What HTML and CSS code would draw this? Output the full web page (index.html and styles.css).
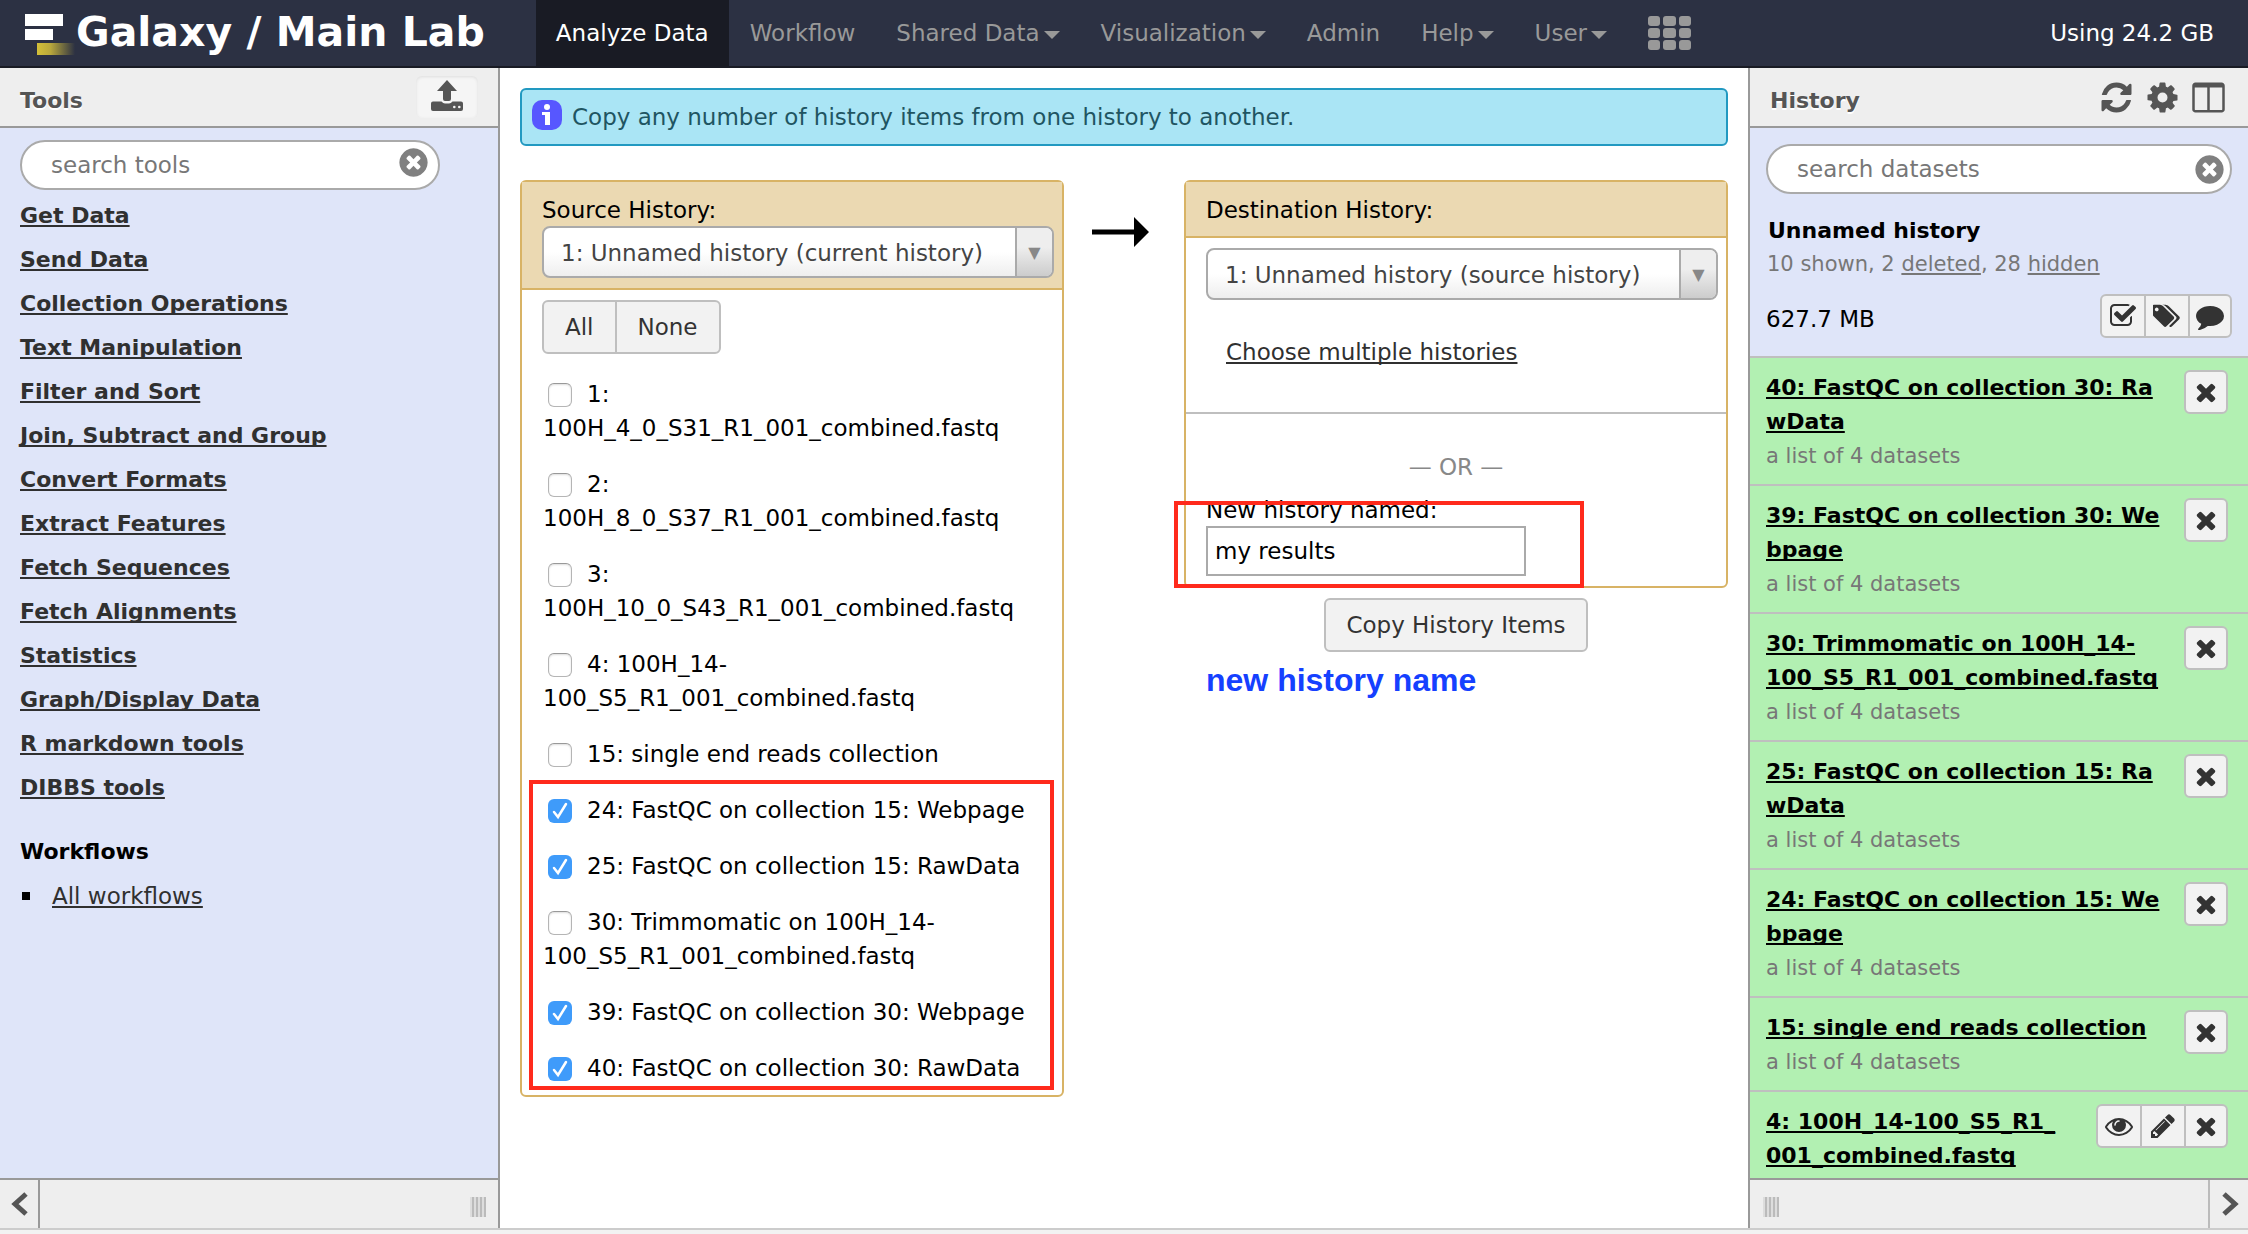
FILE: index.html
```html
<!DOCTYPE html>
<html lang="en">
<head>
<meta charset="utf-8">
<title>Galaxy / Main Lab</title>
<link rel="stylesheet" href="styles.css">
</head>
<body>
<svg class="sprite" aria-hidden="true">
  <symbol id="i-times" viewBox="0 0 1792 1792"><path d="M1490 1322q0 40-28 68l-136 136q-28 28-68 28t-68-28l-294-294-294 294q-28 28-68 28t-68-28l-136-136q-28-28-28-68t28-68l294-294-294-294q-28-28-28-68t28-68l136-136q28-28 68-28t68 28l294 294 294-294q28-28 68-28t68 28l136 136q28 28 28 68t-28 68l-294 294 294 294q28 28 28 68z"/></symbol>
  <symbol id="i-clear" viewBox="0 0 1792 1792"><path d="M1277 1122q0-26-19-45l-181-181 181-181q19-19 19-45 0-27-19-46l-90-90q-19-19-46-19-26 0-45 19l-181 181-181-181q-19-19-45-19-27 0-46 19l-90 90q-19 19-19 46 0 26 19 45l181 181-181 181q-19 19-19 45 0 27 19 46l90 90q19 19 46 19 26 0 45-19l181-181 181 181q19 19 45 19 27 0 46-19l90-90q19-19 19-46zm387-226q0 209-103 385.5t-279.5 279.5-385.5 103-385.5-103-279.5-279.5-103-385.5 103-385.5 279.5-279.5 385.5-103 385.5 103 279.5 279.5 103 385.5z"/></symbol>
  <symbol id="i-refresh" viewBox="0 0 1792 1792"><path d="M1639 1056q0 5-1 7-64 268-268 434.5t-478 166.5q-146 0-282.5-55t-243.5-157l-129 129q-19 19-45 19t-45-19-19-45v-448q0-26 19-45t45-19h448q26 0 45 19t19 45-19 45l-137 137q71 66 161 102t187 36q134 0 250-65t186-179q11-17 53-117 8-23 30-23h192q13 0 22.5 9.5t9.5 22.5zm25-800v448q0 26-19 45t-45 19h-448q-26 0-45-19t-19-45 19-45l138-138q-148-137-349-137-134 0-250 65t-186 179q-11 17-53 117-8 23-30 23h-199q-13 0-22.5-9.5t-9.5-22.5v-7q65-268 270-434.5t480-166.5q146 0 284 55.5t245 156.5l130-129q19-19 45-19t45 19 19 45z"/></symbol>
  <symbol id="i-cog" viewBox="0 0 1792 1792"><path d="M1152 896q0-106-75-181t-181-75-181 75-75 181 75 181 181 75 181-75 75-181zm512-109v222q0 12-8 23t-20 13l-185 28q-19 54-39 91 35 50 107 138 10 12 10 25t-9 23q-27 37-99 108t-94 71q-12 0-26-9l-138-108q-44 23-91 38-16 136-29 186-7 28-36 28h-222q-14 0-24.5-8.5t-11.5-21.5l-28-184q-49-16-90-37l-141 107q-10 9-25 9-14 0-25-11-126-114-165-168-7-10-7-23 0-12 8-23 15-21 51-66.5t54-70.5q-27-50-41-99l-183-27q-13-2-21-12.5t-8-23.5v-222q0-12 8-23t19-13l186-28q14-46 39-92-40-57-107-138-10-12-10-24 0-10 9-23 26-36 98.5-107.5t94.5-71.5q13 0 26 10l138 107q44-23 91-38 16-136 29-186 7-28 36-28h222q14 0 24.5 8.5t11.5 21.5l28 184q49 16 90 37l142-107q9-9 24-9 13 0 25 10 129 119 165 170 7 8 7 22 0 12-8 23-15 21-51 66.5t-54 70.5q26 50 41 98l183 28q13 2 21 12.5t8 23.5z"/></symbol>
  <symbol id="i-columns" viewBox="0 0 1792 1792"><path d="M224 1536h608v-1152h-640v1120q0 13 9.5 22.5t22.5 9.5zm1376-32v-1120h-640v1152h608q13 0 22.5-9.5t9.5-22.5zm128-1216v1216q0 66-47 113t-113 47h-1344q-66 0-113-47t-47-113v-1216q0-66 47-113t113-47h1344q66 0 113 47t47 113z"/></symbol>
  <symbol id="i-check" viewBox="0 0 1792 1792"><path d="M1472 930v318q0 119-84.5 203.5t-203.5 84.5h-832q-119 0-203.5-84.5t-84.5-203.5v-832q0-119 84.5-203.5t203.5-84.5h832q63 0 117 25 15 7 18 23 3 17-9 29l-49 49q-10 10-23 10-3 0-9-2-23-6-45-6h-832q-66 0-113 47t-47 113v832q0 66 47 113t113 47h832q66 0 113-47t47-113v-254q0-13 9-22l64-64q10-10 23-10 6 0 12 3 20 8 20 29zm231-489l-814 814q-24 24-57 24t-57-24l-430-430q-24-24-24-57t24-57l110-110q24-24 57-24t57 24l263 263 647-647q24-24 57-24t57 24l110 110q24 24 24 57t-24 57z"/></symbol>
  <symbol id="i-tags" viewBox="0 0 1920 1792"><path d="M384 448q0-53-37.5-90.5t-90.5-37.5-90.5 37.5-37.5 90.5 37.5 90.5 90.5 37.5 90.5-37.5 37.5-90.5zm1067 576q0 53-37 90l-491 492q-39 37-91 37-53 0-90-37l-715-716q-38-37-64.5-101t-26.5-117v-416q0-52 38-90t90-38h416q53 0 117 26.5t102 64.5l715 714q37 39 37 91zm384 0q0 53-37 90l-491 492q-39 37-91 37-36 0-59-14t-53-45l470-470q37-37 37-90 0-52-37-91l-715-714q-38-38-102-64.5t-117-26.5h224q53 0 117 26.5t102 64.5l715 714q37 39 37 91z"/></symbol>
  <symbol id="i-comment" viewBox="0 0 1792 1792"><path d="M1792 896q0 174-120 321.5t-326 233-450 85.5q-70 0-145-8-198 175-460 242-49 14-114 22-17 2-30.5-9t-17.5-29v-1q-3-4-.5-12t2-10 4.5-9.5l6-9 7-8.5 8-9q7-8 31-34.5t34.5-38 31-39.5 32.5-51 27-59 26-76q-157-89-247.5-220t-90.5-281q0-130 71-248.5t191-204.5 286-136.5 348-50.5q244 0 450 85.5t326 233 120 321.5z"/></symbol>
  <symbol id="i-eye" viewBox="0 0 1792 1792"><path d="M1664 960q-152-236-381-353 61 104 61 225 0 185-131.5 316.5t-316.5 131.5-316.5-131.5-131.5-316.5q0-121 61-225-229 117-381 353 133 205 333.5 326.5t434.5 121.5 434.5-121.5 333.5-326.5zm-720-384q0-20-14-34t-34-14q-125 0-214.5 89.5t-89.5 214.5q0 20 14 34t34 14 34-14 14-34q0-86 61-147t147-61q20 0 34-14t14-34zm848 384q0 34-20 69-140 230-376.5 368.5t-499.5 138.5-499.5-139-376.5-368q-20-35-20-69t20-69q140-229 376.5-368t499.5-139 499.5 139 376.5 368q20 35 20 69z"/></symbol>
  <symbol id="i-pencil" viewBox="0 0 1792 1792"><path d="M491 1536l91-91-235-235-91 91v107h128v128h107zm523-928q0-22-22-22-10 0-17 7l-542 542q-7 7-7 17 0 22 22 22 10 0 17-7l542-542q7-7 7-17zm-54-192l416 416-832 832h-416v-416zm683 96q0 53-37 90l-166 166-416-416 166-165q36-38 90-38 53 0 91 38l235 234q37 39 37 91z"/></symbol>
</svg>

<header class="masthead">
  <a class="brand" href="#">
    <svg class="logo" viewBox="0 0 52 42" aria-hidden="true">
      <defs><linearGradient id="beam"><stop offset="0" stop-color="#d3bf38"/><stop offset=".35" stop-color="#b9a83c"/><stop offset="1" stop-color="#2c3143"/></linearGradient></defs>
      <rect x="1" y="1" width="38" height="12" fill="#fff"/>
      <rect x="1" y="16" width="28" height="11" fill="#fff"/>
      <rect x="13" y="30" width="38" height="12" fill="url(#beam)"/>
    </svg>
    <span>Galaxy / Main Lab</span>
  </a>
  <nav class="menu">
    <a class="active" href="#">Analyze Data</a>
    <a href="#">Workflow</a>
    <a class="drop" href="#">Shared Data</a>
    <a class="drop" href="#">Visualization</a>
    <a href="#">Admin</a>
    <a class="drop" href="#">Help</a>
    <a class="drop" href="#">User</a>
    <a href="#" aria-label="Scratchbook">
      <svg class="grid-icon" viewBox="0 0 43 34"><g fill="#999"><rect width="12" height="10" rx="3"/><rect x="15" width="13" height="10" rx="3"/><rect x="31" width="12" height="10" rx="3"/><rect y="12" width="12" height="10" rx="3"/><rect x="15" y="12" width="13" height="10" rx="3"/><rect x="31" y="12" width="12" height="10" rx="3"/><rect y="24" width="12" height="10" rx="3"/><rect x="15" y="24" width="13" height="10" rx="3"/><rect x="31" y="24" width="12" height="10" rx="3"/></g></svg>
    </a>
  </nav>
  <span class="quota">Using 24.2 GB</span>
</header>

<div class="columns">
  <aside class="panel tools">
    <div class="panel-head">
      <h2>Tools</h2>
      <button class="upload" type="button" aria-label="Upload data">
        <svg viewBox="0 0 32 32"><path fill="#555" d="M16 0l10 11h-6v8q0 2-2 2h-4q-2 0-2-2v-8H6z"/><path fill="#555" fill-rule="evenodd" d="M2 21.500h8.500q1.500 2 3.500 2h4q2 0 3.500-2H30q2 0 2 2V29q0 2-2 2H2q-2 0-2-2v-5.500q0-2 2-2zM22 27a1.300 1.300 0 1 0 2.600 0a1.300 1.300 0 1 0-2.600 0zM27 27a1.300 1.300 0 1 0 2.600 0a1.300 1.300 0 1 0-2.600 0z"/></svg>
      </button>
    </div>
    <div class="panel-body">
      <div class="search">
        <input type="text" placeholder="search tools" aria-label="search tools">
        <button type="button" aria-label="Clear search"><svg><use href="#i-clear"/></svg></button>
      </div>
      <ul class="sections">
        <li><a href="#">Get Data</a></li>
        <li><a href="#">Send Data</a></li>
        <li><a href="#">Collection Operations</a></li>
        <li><a href="#">Text Manipulation</a></li>
        <li><a href="#">Filter and Sort</a></li>
        <li><a href="#">Join, Subtract and Group</a></li>
        <li><a href="#">Convert Formats</a></li>
        <li><a href="#">Extract Features</a></li>
        <li><a href="#">Fetch Sequences</a></li>
        <li><a href="#">Fetch Alignments</a></li>
        <li><a href="#">Statistics</a></li>
        <li><a href="#">Graph/Display Data</a></li>
        <li><a href="#">R markdown tools</a></li>
        <li><a href="#">DIBBS tools</a></li>
      </ul>
      <h3>Workflows</h3>
      <ul class="workflows"><li><a href="#">All workflows</a></li></ul>
    </div>
    <div class="panel-foot">
      <button class="collapse" type="button" aria-label="Hide tools"><svg viewBox="0 0 18 26"><path d="M15 3L4 13l11 10"/></svg></button>
      <span class="grip"></span>
    </div>
  </aside>

  <main class="center">
    <p class="info">
      <svg viewBox="0 0 30 30" aria-hidden="true"><rect width="30" height="30" rx="10" fill="#5757ff"/><g fill="#fff"><circle cx="15" cy="7" r="3"/><path d="M10 12h8v13h-5V15h-3z"/></g></svg>
      Copy any number of history items from one history to another.
    </p>
    <form class="transfer">
      <section class="card">
        <div class="card-head">
          <label for="source">Source History:</label>
          <span class="select"><select id="source"><option>1: Unnamed history (current history)</option></select></span>
        </div>
        <div class="card-body">
          <div class="group pick"><button type="button">All</button><button type="button">None</button></div>
          <ul class="items">
            <li><label><input type="checkbox">1: 100H_4_0_S31_R1_001_combined.fastq</label></li>
            <li><label><input type="checkbox">2: 100H_8_0_S37_R1_001_combined.fastq</label></li>
            <li><label><input type="checkbox">3: 100H_10_0_S43_R1_001_combined.fastq</label></li>
            <li><label><input type="checkbox">4: 100H_14-<wbr>100_S5_R1_001_combined.fastq</label></li>
            <li><label><input type="checkbox">15: single end reads collection</label></li>
            <li><label><input type="checkbox" checked>24: FastQC on collection 15: Webpage</label></li>
            <li><label><input type="checkbox" checked>25: FastQC on collection 15: RawData</label></li>
            <li><label><input type="checkbox">30: Trimmomatic on 100H_14-<wbr>100_S5_R1_001_combined.fastq</label></li>
            <li><label><input type="checkbox" checked>39: FastQC on collection 30: Webpage</label></li>
            <li><label><input type="checkbox" checked>40: FastQC on collection 30: RawData</label></li>
          </ul>
        </div>
        <span class="mark mark-items"></span>
      </section>

      <svg class="arrow" viewBox="0 0 58 30" aria-hidden="true"><path d="M0 12.500h42V0l15 15-15 15V17.500H0z"/></svg>

      <div class="target">
        <section class="card">
          <div class="card-head"><label for="dest">Destination History:</label></div>
          <div class="card-body">
            <span class="select"><select id="dest"><option>1: Unnamed history (source history)</option></select></span>
            <a class="multiple" href="#">Choose multiple histories</a>
          </div>
          <div class="card-new">
            <p class="or">— OR —</p>
            <label for="new-name">New history named:</label>
            <input id="new-name" type="text" value="my results">
          </div>
          <span class="mark mark-name"></span>
        </section>
        <button class="copy" type="button">Copy History Items</button>
        <p class="note">new history name</p>
      </div>
    </form>
  </main>

  <aside class="panel history">
    <div class="panel-head">
      <h2>History</h2>
      <div class="head-icons">
        <button type="button" aria-label="Refresh history"><svg><use href="#i-refresh"/></svg></button>
        <button type="button" aria-label="History options"><svg><use href="#i-cog"/></svg></button>
        <button type="button" aria-label="View all histories"><svg><use href="#i-columns"/></svg></button>
      </div>
    </div>
    <div class="panel-body">
      <div class="summary">
        <div class="search">
          <input type="text" placeholder="search datasets" aria-label="search datasets">
          <button type="button" aria-label="Clear search"><svg><use href="#i-clear"/></svg></button>
        </div>
        <h3>Unnamed history</h3>
        <p class="counts">10 shown, 2 <a href="#">deleted</a>, 28 <a href="#">hidden</a></p>
        <div class="size">
          <span>627.7 MB</span>
          <div class="group icons">
            <button type="button" aria-label="Select datasets"><svg><use href="#i-check"/></svg></button>
            <button type="button" aria-label="Edit tags"><svg><use href="#i-tags"/></svg></button>
            <button type="button" aria-label="Edit annotation"><svg><use href="#i-comment"/></svg></button>
          </div>
        </div>
      </div>
      <ul class="datasets">
        <li><div><a href="#">40: FastQC on collection 30: Ra<br>wData</a><p>a list of 4 datasets</p></div><div class="group icons"><button type="button" aria-label="Delete"><svg><use href="#i-times"/></svg></button></div></li>
        <li><div><a href="#">39: FastQC on collection 30: We<br>bpage</a><p>a list of 4 datasets</p></div><div class="group icons"><button type="button" aria-label="Delete"><svg><use href="#i-times"/></svg></button></div></li>
        <li><div><a href="#">30: Trimmomatic on 100H_14-<br>100_S5_R1_001_combined.fastq</a><p>a list of 4 datasets</p></div><div class="group icons"><button type="button" aria-label="Delete"><svg><use href="#i-times"/></svg></button></div></li>
        <li><div><a href="#">25: FastQC on collection 15: Ra<br>wData</a><p>a list of 4 datasets</p></div><div class="group icons"><button type="button" aria-label="Delete"><svg><use href="#i-times"/></svg></button></div></li>
        <li><div><a href="#">24: FastQC on collection 15: We<br>bpage</a><p>a list of 4 datasets</p></div><div class="group icons"><button type="button" aria-label="Delete"><svg><use href="#i-times"/></svg></button></div></li>
        <li><div><a href="#">15: single end reads collection</a><p>a list of 4 datasets</p></div><div class="group icons"><button type="button" aria-label="Delete"><svg><use href="#i-times"/></svg></button></div></li>
        <li><div><a href="#">4: 100H_14-100_S5_R1_<br>001_combined.fastq</a></div><div class="group icons"><button type="button" aria-label="View data"><svg><use href="#i-eye"/></svg></button><button type="button" aria-label="Edit attributes"><svg><use href="#i-pencil"/></svg></button><button type="button" aria-label="Delete"><svg><use href="#i-times"/></svg></button></div></li>
      </ul>
    </div>
    <div class="panel-foot">
      <span class="grip"></span>
      <button class="collapse" type="button" aria-label="Hide history"><svg viewBox="0 0 18 26"><path d="M3 3l11 10L3 23"/></svg></button>
    </div>
  </aside>
</div>
<footer class="status"></footer>
</body>
</html>
```
FILE: styles.css
```css
* { box-sizing: border-box; }

body {
  margin: 0;
  height: 100vh;
  display: flex;
  flex-direction: column;
  overflow: hidden;
  background: #fff;
  color: #000;
  font: 23px/34px "DejaVu Sans", Verdana, sans-serif;
}

h2, h3, p, ul { margin: 0; padding: 0; }
h2, h3 { font-size: 22px; }
ul { list-style: none; }
button, input, select { font: inherit; color: inherit; margin: 0; padding: 0; }
button { background: none; border: 0; }
svg { display: block; }
.sprite { position: absolute; width: 0; height: 0; }

a {
  color: #303030;
  text-decoration-thickness: 2px;
  text-underline-offset: 2px;
  text-decoration-skip-ink: none;
}

/* Masthead */
.masthead {
  flex: none;
  display: flex;
  height: 68px;
  background: #2c3143;
  border-bottom: 2px solid #191b24;
}
.brand {
  display: flex;
  align-items: center;
  padding: 0 51px 2px 24px;
  color: #fff;
  font-size: 41px;
  font-weight: bold;
  text-decoration: none;
}
.logo { width: 52px; height: 42px; margin-top: 4px; }
.menu { display: flex; gap: 1px; }
.menu a {
  display: flex;
  align-items: center;
  padding: 0 20px;
  color: #999;
  text-decoration: none;
}
.menu .active { background: #191b24; color: #fff; }
.drop::after {
  content: "";
  margin: 4px 0 0 4px;
  border: 8px solid transparent;
  border-top-color: #999;
  border-bottom: 0;
}
.grid-icon { width: 43px; height: 34px; }
.quota { margin: auto 34px auto auto; color: #fff; }

/* Side panels */
.columns {
  flex: 1;
  min-height: 0;
  display: grid;
  grid-template-columns: 500px minmax(0, 1fr) 500px;
}
.panel {
  display: flex;
  flex-direction: column;
  min-height: 0;
  background: #dfe5f9;
}
.tools { border-right: 2px solid #999; }
.history { border-left: 2px solid #999; }
.panel-head {
  flex: none;
  display: flex;
  align-items: center;
  justify-content: space-between;
  height: 60px;
  padding: 0 20px;
  background: #eee;
  border-bottom: 2px solid #999;
  color: #555;
}
.panel-head h2 { padding-top: 8px; text-shadow: 0 2px #fff; }
.upload {
  padding: 4px 15px 6px;
  border-radius: 6px;
  background: #f5f5f5;
  box-shadow: inset 0 1px 3px #ddd;
}
.upload svg { width: 32px; height: 32px; }
.head-icons { display: flex; gap: 11px; }
.history .panel-head { padding-right: 22px; }
.head-icons svg { width: 35px; height: 35px; fill: #555; }
.panel-body { flex: 1; min-height: 0; overflow: hidden; }
.tools .panel-body { padding: 12px 20px; }
.panel-foot {
  flex: none;
  display: flex;
  align-items: center;
  justify-content: space-between;
  height: 50px;
  background: #eee;
  border-top: 2px solid #999;
}
.collapse { align-self: stretch; display: flex; align-items: center; padding: 0 9px 0 11px; }
.collapse svg { width: 18px; height: 26px; fill: none; stroke: #555; stroke-width: 5px; }
.tools .collapse { border-right: 2px solid #999; }
.history .collapse { border-left: 2px solid #bbb; }
.grip {
  width: 16px;
  height: 20px;
  margin: 6px 12px 0 13px;
  background: repeating-linear-gradient(90deg, #ddd 0 2px, #bbb 2px 4px);
}

/* Search boxes */
.search {
  display: flex;
  align-items: center;
  height: 50px;
  padding: 0 4px 0 29px;
  background: #fff;
  border: 2px solid #aaa;
  border-radius: 25px;
}
.search input { flex: 1; min-width: 0; border: 0; background: none; outline: 0; }
.search input::placeholder { color: #777; opacity: 1; }
.search svg { width: 33px; height: 33px; fill: #808080; }
.tools .search { width: 420px; padding-right: 8px; }
.tools .search button { padding-bottom: 6px; }

/* Tool menu */
.sections { margin: 4px 0 20px; font-size: 22px; font-weight: bold; line-height: 44px; }
.tools h3, .workflows { line-height: 44px; }
.workflows li { display: flex; align-items: center; gap: 22px; }
.workflows li::before { content: ""; width: 8px; height: 8px; margin-left: 2px; background: #000; }

/* Centre */
.center { padding: 20px; }
.info {
  display: flex;
  align-items: center;
  gap: 10px;
  height: 58px;
  margin-bottom: 34px;
  padding: 0 10px;
  background: #aae5f5;
  border: 2px solid #2299c1;
  border-radius: 6px;
  color: #1f5562;
}
.info svg { width: 30px; height: 30px; margin-bottom: 4px; }
.transfer {
  display: grid;
  grid-template-columns: minmax(0, 1fr) 120px minmax(0, 1fr);
  align-items: start;
}
.card {
  position: relative;
  border: 2px solid #d8b365;
  border-radius: 6px;
}
.card-head {
  padding: 12px 8px 10px 20px;
  background: #ebd9b2;
  border-bottom: 2px solid #d8b365;
}
.card label[for] { display: block; line-height: 32px; }
.card-body { padding: 10px 8px 10px 20px; }
.select { display: block; position: relative; }
.select select {
  display: block;
  width: 100%;
  height: 52px;
  padding: 2px 50px 0 17px;
  appearance: none;
  background: linear-gradient(#fff 50%, #eee);
  border: 2px solid #aaa;
  border-radius: 8px;
  color: #444;
}
.select::after {
  content: "▼";
  position: absolute;
  inset: 2px 2px 2px auto;
  width: 35px;
  background: linear-gradient(#eee 40%, #ccc);
  border-left: 2px solid #aaa;
  border-radius: 0 6px 6px 0;
  color: #888;
  font-size: 16px;
  line-height: 50px;
  text-align: center;
  pointer-events: none;
}
.group {
  display: flex;
  width: max-content;
  overflow: hidden;
  background: #f2f2f2;
  border: 2px solid #bfbfbf;
  border-radius: 6px;
  color: #333;
}
.group button + button { border-left: 2px solid #bfbfbf; }
.pick button { height: 50px; padding: 0 21px; }
.items {
  display: grid;
  gap: 22px;
  margin-top: 23px;
  padding-left: 1px;
}
.items input {
  appearance: none;
  width: 24px;
  height: 24px;
  margin: 0 15px 0 5px;
  vertical-align: -5px;
  background: #fff;
  border: 1px solid #b5b5b5;
  border-top-color: #999;
  border-radius: 6px;
  box-shadow: inset 0 1px 2px #ddd;
}
.items input:checked {
  border: 0;
  box-shadow: none;
  background: #3f9bfa url('data:image/svg+xml,<svg xmlns="http://www.w3.org/2000/svg" viewBox="0 0 24 24"><path d="M6 13l4 5 8-13" fill="none" stroke="white" stroke-width="2.500" stroke-linecap="round"/></svg>');
}
.arrow { width: 58px; height: 30px; margin: 37px 0 0 28px; }
.multiple { display: inline-block; margin: 35px 0 33px 20px; }
.card-new { padding: 36px 8px 10px 20px; border-top: 2px solid #bfbfbf; }
.or { margin-bottom: 10px; padding-right: 12px; color: #888; text-align: center; }
.card-new input {
  display: block;
  width: 320px;
  height: 50px;
  padding: 0 7px;
  background: #fff;
  border: 2px solid #aaa;
}
.copy {
  display: block;
  height: 54px;
  margin: 10px auto;
  padding: 0 20px;
  background: #f2f2f2;
  border: 2px solid #bfbfbf;
  border-radius: 6px;
  color: #333;
}
.note {
  padding-left: 22px;
  color: #1540ff;
  font: bold 32px/36px "Liberation Sans", Arial, sans-serif;
}

/* Highlight frames drawn over the form */
.mark { position: absolute; border: 4px solid #ff2a1c; pointer-events: none; }
.mark-items { inset: auto 8px 5px 7px; height: 310px; }
.mark-name { left: -12px; bottom: -2px; width: 410px; height: 87px; }

/* History */
.history .panel-body { display: flex; flex-direction: column; }
.summary { flex: none; padding: 16px 16px 18px; border-bottom: 2px solid #bfbfbf; }
.summary h3 { margin-top: 20px; padding-left: 2px; }
.counts { padding-left: 1px; color: #777; font-size: 21px; line-height: 32px; }
.counts a { color: inherit; }
.size { display: flex; justify-content: space-between; align-items: flex-end; margin-top: 14px; }
.size > span { padding-bottom: 2px; }
.icons button {
  display: flex;
  align-items: center;
  justify-content: center;
  width: 44px;
  height: 40px;
}
.icons button:first-child,
.icons button:last-child { width: 42px; }
.icons button:only-child { width: 40px; }
.icons button svg { width: 28px; height: 28px; fill: #333; }
.datasets { flex: 1; min-height: 0; overflow: hidden; background: #b2f0b2; }
.datasets li {
  display: flex;
  justify-content: space-between;
  align-items: flex-start;
  padding: 12px 20px 12px 16px;
  border-bottom: 2px solid #bfbfbf;
}
.datasets a { display: block; padding-top: 1px; color: #000; font-size: 22px; font-weight: bold; }
.datasets p { margin-top: 1px; color: #777; font-size: 21px; line-height: 32px; }

.status { flex: none; height: 6px; background: #f2f2f2; border-top: 2px solid #ccc; }
```
